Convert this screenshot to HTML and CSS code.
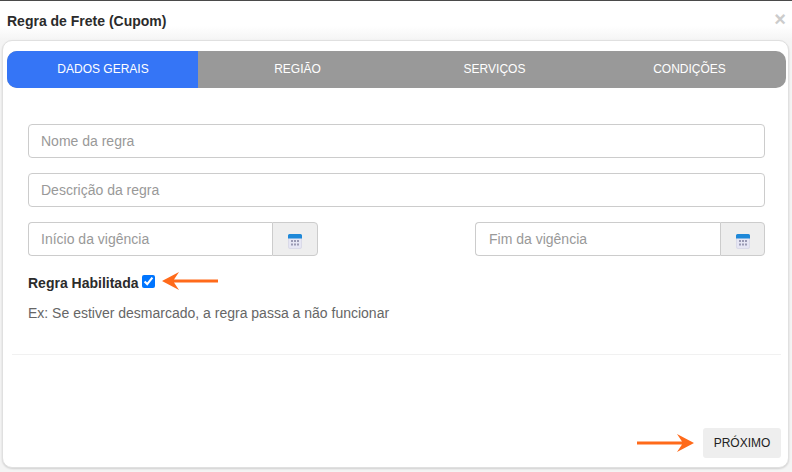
FILE: index.html
```html
<!DOCTYPE html>
<html lang="pt-BR">
<head>
<meta charset="utf-8">
<title>Regra de Frete (Cupom)</title>
<link rel="stylesheet" href="styles.css">
</head>
<body>
<div class="dialog">
  <header class="dialog-head">
    <h1 class="dialog-title">Regra de Frete (Cupom)</h1>
    <span class="dialog-close">×</span>
  </header>
  <main class="card">
    <nav class="tabs">
      <div class="tab tab-active">DADOS GERAIS</div>
      <div class="tab">REGIÃO</div>
      <div class="tab">SERVIÇOS</div>
      <div class="tab">CONDIÇÕES</div>
    </nav>
    <form class="form">
      <input class="field" type="text" placeholder="Nome da regra">
      <input class="field" type="text" placeholder="Descrição da regra">
      <div class="dates">
        <div class="date-group">
          <input class="field field-date" type="text" placeholder="Início da vigência">
          <span class="addon">
            <svg class="cal" width="14" height="15" viewBox="0 0 14 15"><rect x="0.5" y="0.5" width="13" height="14" rx="1.5" fill="#e6e6f4" stroke="#d2d2e4" stroke-width="0.7"/><path d="M0 4.5V1.5A1.5 1.5 0 0 1 1.5 0h11A1.5 1.5 0 0 1 14 1.5V4.5z" fill="#1e88d8"/><path d="M3 6h2v2H3zM6 6h2v2H6zM9 6h2v2H9zM3 9.5h2v2H3zM6 9.5h2v2H6zM9 9.5h2v2H9z" fill="#9a9ab4"/></svg>
          </span>
        </div>
        <div class="date-group date-group-end">
          <input class="field field-date" type="text" placeholder="Fim da vigência">
          <span class="addon">
            <svg class="cal" width="14" height="15" viewBox="0 0 14 15"><rect x="0.5" y="0.5" width="13" height="14" rx="1.5" fill="#e6e6f4" stroke="#d2d2e4" stroke-width="0.7"/><path d="M0 4.5V1.5A1.5 1.5 0 0 1 1.5 0h11A1.5 1.5 0 0 1 14 1.5V4.5z" fill="#1e88d8"/><path d="M3 6h2v2H3zM6 6h2v2H6zM9 6h2v2H9zM3 9.5h2v2H3zM6 9.5h2v2H6zM9 9.5h2v2H9z" fill="#9a9ab4"/></svg>
          </span>
        </div>
      </div>
      <div class="check-row">
        <label class="check-label" for="hab">Regra Habilitada</label>
        <input class="check" id="hab" type="checkbox" checked>
        <svg class="arrow-left" width="56" height="18" viewBox="0 0 56 18"><path d="M0 9L17 0L12 7.5H56V10.5H12L17 18z" fill="#ff6a1a"/></svg>
      </div>
      <p class="help">Ex: Se estiver desmarcado, a regra passa a não funcionar</p>
    </form>
    <hr class="divider">
    <footer class="card-foot">
      <svg class="arrow-right" width="57" height="18" viewBox="0 0 57 18"><path d="M57 9L40 0L45 7.5H0V10.5H45L40 18z" fill="#ff6a1a"/></svg>
      <button class="next" type="button">PRÓXIMO</button>
    </footer>
  </main>
</div>
</body>
</html>
```
FILE: styles.css
```css
* { box-sizing: border-box; }
html, body { margin: 0; height: 100%; }
body {
  width: 792px;
  height: 472px;
  overflow: hidden;
  background: #fff;
  font-family: "Liberation Sans", Arial, sans-serif;
  color: #333;
}
.dialog {
  height: 472px;
  border-top: 1px solid #4a4a4a;
  display: flex;
  flex-direction: column;
  padding: 0 3px 4px 2px;
  background: linear-gradient(#fff 0, #fff 25px, #f4f4f4 40px, #f4f4f4 100%);
}
.dialog-head {
  height: 39px;
  flex: none;
  display: flex;
  justify-content: space-between;
  padding: 0 3px 0 5px;
}
.dialog-title {
  margin: 12px 0 0;
  font-size: 14px;
  line-height: 16px;
  font-weight: 700;
  color: #2b2b2b;
}
.dialog-close {
  margin-top: 8px;
  font-size: 20px;
  line-height: 20px;
  font-weight: 700;
  color: #ccc;
}
.card {
  flex: 1;
  background: #fff;
  border: 1px solid #e0e0e0;
  border-radius: 10px;
  box-shadow: 0 1px 2px rgba(0,0,0,.15);
  padding: 10px 2px 0 4px;
  display: flex;
  flex-direction: column;
}
.tabs {
  display: grid;
  grid-template-columns: 191px 198px 196px 194px;
  height: 37px;
  flex: none;
  background: #999;
  border-radius: 10px;
  overflow: hidden;
}
.tab {
  padding-left: 1px;
  color: #fff;
  font-size: 12px;
  line-height: 36px;
  text-align: center;
}
.tab-active { background: #3575f6; }
.form {
  padding: 36px 21px 0 21px;
  display: flex;
  flex-direction: column;
}
.field {
  display: block;
  width: 100%;
  height: 34px;
  margin-bottom: 15px;
  padding: 0 12px;
  border: 1px solid #ccc;
  border-radius: 4px;
  background: #fff;
  font: 14px "Liberation Sans", Arial, sans-serif;
  color: #555;
  outline: none;
}
.field::placeholder { color: #999; opacity: 1; }
.dates {
  display: flex;
  justify-content: space-between;
}
.date-group {
  display: flex;
  width: 290px;
  height: 34px;
}
.field-date {
  flex: 1;
  min-width: 0;
  margin: 0;
  border-radius: 4px 0 0 4px;
  border-right: 0;
}
.addon {
  width: 46px;
  flex: none;
  display: flex;
  align-items: center;
  justify-content: center;
  padding-top: 4px;
  background: #eee;
  border: 1px solid #ccc;
  border-radius: 0 4px 4px 0;
}
.date-group-end .field-date { padding-left: 13px; }
.date-group-end .addon { width: 45px; }
.check-row {
  display: flex;
  align-items: flex-start;
  height: 18px;
  margin-top: 18px;
}
.check-label {
  font-size: 14px;
  line-height: 18px;
  font-weight: 700;
  color: #2b2b2b;
}
.check {
  width: 13px;
  height: 13px;
  margin: 1px 0 0 4px;
  accent-color: #0075ff;
}
.arrow-left { margin: -2px 0 0 7px; }
.help {
  margin: 11px 0 0;
  font-size: 14px;
  line-height: 20px;
  color: #666;
}
.divider {
  margin: 31px 5px 0 5px;
  border: 0;
  border-top: 1px solid #f1f1f1;
}
.card-foot {
  margin-top: auto;
  display: flex;
  align-items: center;
  justify-content: flex-end;
  padding: 0 5px 9px 0;
}
.arrow-right { margin-right: 9px; }
.next {
  width: 78px;
  height: 30px;
  padding: 0;
  border: 0;
  border-radius: 3px;
  background: #eee;
  color: #222;
  font: 12px "Liberation Sans", Arial, sans-serif;
}
```
